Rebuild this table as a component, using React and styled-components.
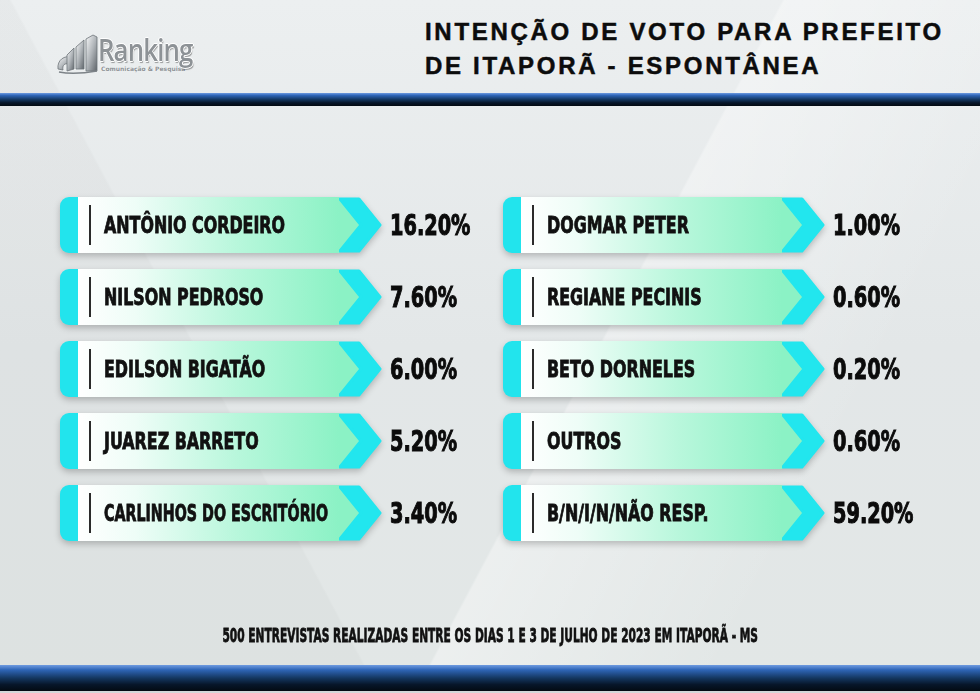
import styled, { createGlobalStyle } from "styled-components";

const GlobalStyle = createGlobalStyle`
  body {
    margin: 0;
    font-family: "Liberation Sans", Arial, sans-serif;
    background: #e4e8e9;
  }
`;

// dados da pesquisa
const left = [
  { name: "ANTÔNIO CORDEIRO", value: "16.20%" },
  { name: "NILSON PEDROSO", value: "7.60%" },
  { name: "EDILSON BIGATÃO", value: "6.00%" },
  { name: "JUAREZ BARRETO", value: "5.20%" },
  { name: "CARLINHOS DO ESCRITÓRIO", value: "3.40%", squeeze: 0.62 },
];
const right = [
  { name: "DOGMAR PETER", value: "1.00%" },
  { name: "REGIANE PECINIS", value: "0.60%" },
  { name: "BETO DORNELES", value: "0.20%" },
  { name: "OUTROS", value: "0.60%" },
  { name: "B/N/I/N/NÃO RESP.", value: "59.20%" },
];

const Logo = () => (
  <LogoBox>
    <svg width="42" height="40" viewBox="0 0 42 40">
      <defs>
        <linearGradient id="silver" x1="0" y1="0" x2="1" y2="1">
          <stop offset="0" stopColor="#f6f7f8" />
          <stop offset="0.5" stopColor="#b0b5b9" />
          <stop offset="1" stopColor="#5f656a" />
        </linearGradient>
      </defs>
      <path d="M2 35 C1 26 8 21 17 23 L12 30 C9 29 6 31 7 36 Z" fill="url(#silver)" stroke="#6d7378" strokeWidth="0.8" />
      <path d="M11 21 L18 14 L18 35 L11 37 Z" fill="url(#silver)" stroke="#6d7378" strokeWidth="0.8" />
      <path d="M20 13 L28 6 L28 35 L20 35 Z" fill="url(#silver)" stroke="#6d7378" strokeWidth="0.8" />
      <path d="M30 5 L37 1 L41 3 L41 37 L30 37 Z" fill="url(#silver)" stroke="#6d7378" strokeWidth="0.8" />
      <path d="M3 38 C14 40 29 39 41 37" fill="none" stroke="#7d8388" strokeWidth="1.5" />
    </svg>
    <LogoText>
      <Brand>Ranking</Brand>
      <Tagline>Comunicação &amp; Pesquisa</Tagline>
    </LogoText>
  </LogoBox>
);

const Tip = () => (
  <svg width="44" height="56" viewBox="0 0 44 56">
    <polygon points="0,0 22,28 0,56" fill="#8bf2c5" />
    <polygon
      points="1,2 20,2 41,28 20,54 1,54 22,28"
      fill="#22e6ee"
      stroke="#22e6ee"
      strokeWidth="3"
      strokeLinejoin="round"
    />
  </svg>
);

const Row = ({ name, value, squeeze }) => (
  <RowBox>
    <Card>
      <Tab />
      <Body>
        <Divider />
        <Name $squeeze={squeeze}>{name}</Name>
      </Body>
      <Tip />
    </Card>
    <Percent>{value}</Percent>
  </RowBox>
);

const App = () => {
  return (
    <Page>
      <GlobalStyle />
      <Header>
        <Logo />
        <Title>
          INTENÇÃO DE VOTO PARA PREFEITO
          <br />
          DE ITAPORÃ - ESPONTÂNEA
        </Title>
      </Header>
      <Bar $height={13} />
      <Main>
        {[...left, ...right].map((r) => (
          <Row key={r.name} name={r.name} value={r.value} squeeze={r.squeeze} />
        ))}
      </Main>
      <Note>
        <NoteText>
          500 ENTREVISTAS REALIZADAS ENTRE OS DIAS 1 E 3 DE JULHO DE 2023 EM ITAPORÃ - MS
        </NoteText>
      </Note>
      <Bar $height={26} />
      <Strip />
    </Page>
  );
};

const Page = styled.div`
  width: 980px;
  height: 693px;
  display: flex;
  flex-direction: column;
  overflow: hidden;
  background:
    linear-gradient(118deg, rgba(255, 255, 255, 0) 58%, rgba(255, 255, 255, 0.35) 58.2%, rgba(255, 255, 255, 0) 80%),
    linear-gradient(62deg, rgba(0, 0, 0, 0.025) 28%, rgba(0, 0, 0, 0) 28.2%),
    linear-gradient(180deg, #eceff0 0%, #e3e7e8 50%, #e2e7e6 100%);
`;

const Header = styled.header`
  height: 93px;
  display: grid;
  grid-template-columns: 369px 1fr;
  padding-left: 56px;
  box-sizing: border-box;
`;

const LogoBox = styled.div`
  display: flex;
  align-items: flex-start;
  margin-top: 34px;
`;

const LogoText = styled.div`
  display: flex;
  flex-direction: column;
`;

const Brand = styled.span`
  display: inline-block;
  font-family: "Open Sans", sans-serif;
  font-weight: 600;
  font-size: 30px;
  line-height: 31px;
  letter-spacing: -1px;
  color: #8d9296;
  transform: scaleX(0.86);
  transform-origin: left center;
  text-shadow: 1px 0 0 #fff, -1px 0 0 #fff, 0 1px 0 #fff, 0 -1px 0 #fff, 1px 2px 1px rgba(0, 0, 0, 0.35);
`;

const Tagline = styled.span`
  font-family: "DejaVu Sans", sans-serif;
  font-weight: 700;
  font-size: 6px;
  line-height: 7px;
  margin-left: 3px;
  color: #8d9296;
  text-shadow: 0 0 1px #fff;
`;

const Title = styled.h1`
  margin: 15px 0 0;
  font-family: "Liberation Sans", Arial, sans-serif;
  font-weight: 700;
  font-size: 24px;
  line-height: 34px;
  letter-spacing: 2.7px;
  color: #0c0c0c;
  -webkit-text-stroke: 0.5px #0c0c0c;
`;

const Bar = styled.div`
  height: ${(p) => p.$height}px;
  flex-shrink: 0;
  background: linear-gradient(180deg, #6f9be0 0%, #2f66b8 18%, #143761 50%, #07162a 75%, #030a12 100%);
`;

const Strip = styled.div`
  height: 2px;
  background: #d3d8d9;
`;

const Main = styled.main`
  flex: 1;
  display: grid;
  grid-template-columns: 443px 443px;
  grid-template-rows: repeat(5, 56px);
  grid-auto-flow: column;
  row-gap: 16px;
  align-content: start;
  padding: 91px 0 0 60px;
`;

const RowBox = styled.div`
  display: flex;
  align-items: center;
`;

const Card = styled.div`
  display: flex;
  width: 323px;
  height: 56px;
  flex-shrink: 0;
  filter: drop-shadow(0 3px 3px rgba(0, 0, 0, 0.22));
`;

const Tab = styled.div`
  width: 18px;
  background: #22e4ed;
  border-radius: 9px 0 0 9px;
`;

const Body = styled.div`
  flex: 1;
  min-width: 0;
  display: flex;
  align-items: center;
  padding-left: 11px;
  background: linear-gradient(90deg, #ffffff 0%, #eefdf7 22%, #b9f7dc 60%, #8bf2c5 100%);
`;

const Divider = styled.span`
  width: 2px;
  height: 40px;
  flex-shrink: 0;
  background: #2b2b2b;
  margin-right: 13px;
`;

const Name = styled.span`
  display: inline-block;
  flex-shrink: 0;
  font-family: "DejaVu Sans", sans-serif;
  font-weight: 700;
  font-size: 23px;
  color: #111;
  -webkit-text-stroke: 0.9px #111;
  white-space: nowrap;
  transform: scaleX(${(p) => p.$squeeze || 0.69});
  transform-origin: left center;
`;

const Percent = styled.span`
  display: inline-block;
  margin-left: 7px;
  font-family: "DejaVu Sans", sans-serif;
  font-weight: 700;
  font-size: 28px;
  color: #0b0b0b;
  -webkit-text-stroke: 1.1px #0b0b0b;
  white-space: nowrap;
  transform: scaleX(0.69);
  transform-origin: left center;
`;

const Note = styled.div`
  height: 19px;
  margin-bottom: 20px;
  display: flex;
  justify-content: center;
`;

const NoteText = styled.span`
  display: inline-block;
  font-family: "DejaVu Sans", sans-serif;
  font-weight: 700;
  font-size: 19px;
  line-height: 19px;
  color: #111;
  -webkit-text-stroke: 0.8px #111;
  white-space: nowrap;
  transform: scaleX(0.56);
`;

export default App;
